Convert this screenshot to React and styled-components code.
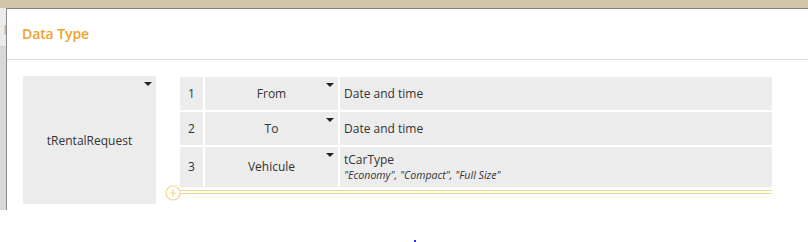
import React from "react";
import styled, { createGlobalStyle } from "styled-components";

const Global = createGlobalStyle`
  html, body { margin: 0; padding: 0; background: #fff; }
  body { font-family: "Open Sans", "Liberation Sans", sans-serif; color: #333; overflow: hidden; }
  * { box-sizing: border-box; }
`;

const Page = styled.div`
  position: relative;
  width: 808px;
  height: 242px;
  display: flex;
  flex-direction: column;
`;

const TopBar = styled.div`
  height: 8px;
  background: #d4c5aa;
  flex: none;
`;

const Main = styled.div`
  display: flex;
  align-items: flex-start;
  flex: 1;
`;

const SideStrip = styled.div`
  width: 7px;
  height: 202px;
  flex: none;
  display: flex;
  flex-direction: column;
  background: #d8d8d8;
  border-right: 1px solid #8a8a8a;
`;

const SideTop = styled.div`
  height: 39px;
  background: #ebebeb;
  display: flex;
  justify-content: flex-end;
  overflow: hidden;
  font-size: 14px;
  color: #b0b0b0;
  padding-top: 14px;
  line-height: 16px;
  border-bottom: 1px solid #cfcfcf;
`;

const SideGlyph = styled.span`
  margin-right: -6px;
`;

const Dialog = styled.div`
  flex: 1;
  border-top: 1px solid #808080;
  background: #fff;
  display: flex;
  flex-direction: column;
`;

const Header = styled.div`
  height: 51px;
  border-bottom: 1px solid #dedede;
  display: flex;
  align-items: center;
  padding-left: 15px;
  padding-bottom: 1px;
`;

const Title = styled.h2`
  margin: 0;
  font-size: 14px;
  font-weight: 600;
  color: #f0a22e;
  letter-spacing: -0.1px;
`;

const Body = styled.div`
  display: flex;
  align-items: flex-start;
  gap: 24px;
  padding: 16px 0 0 16px;
`;

const Caret = styled.span`
  position: absolute;
  top: 6px;
  right: 4px;
  width: 0;
  height: 0;
  border-left: 4px solid transparent;
  border-right: 4px solid transparent;
  border-top: 4px solid #222;
`;

const TypeBox = styled.div`
  position: relative;
  width: 133px;
  height: 128px;
  background: #ececec;
  display: flex;
  align-items: center;
  justify-content: center;
  font-size: 12px;
`;

const TableWrap = styled.div`
  position: relative;
  width: 592px;
  margin-top: 1px;
  display: flex;
  flex-direction: column;
`;

const Rows = styled.div`
  display: flex;
  flex-direction: column;
  gap: 2px;
`;

const Row = styled.div`
  display: grid;
  grid-template-columns: 23px 133px 1fr;
  gap: 2px;
  height: ${(p) => p.$h}px;
`;

const Cell = styled.div`
  position: relative;
  background: #ececec;
  display: flex;
  flex-direction: column;
  justify-content: center;
  align-items: ${(p) => (p.$left ? "flex-start" : "center")};
  padding-left: ${(p) => (p.$left ? "4px" : "0")};
  font-size: 12px;
  line-height: 16px;
`;

const Enum = styled.span`
  font-size: 10.6px;
  font-style: italic;
  line-height: 14px;
  color: #333;
`;

const Footer = styled.div`
  position: relative;
  margin-top: 3px;
  height: 4px;
  border-top: 1px solid #f4d38c;
  border-bottom: 1px solid #f4d38c;
`;

const AddButton = styled.svg`
  position: absolute;
  left: -15px;
  top: -6px;
`;

const Cursor = styled.span`
  position: absolute;
  left: 414px;
  top: 240px;
  width: 2px;
  height: 2px;
  background: #2a2aff;
`;

const rows = [
  { n: 1, name: "From", type: "Date and time", h: 33 },
  { n: 2, name: "To", type: "Date and time", h: 33 },
  { n: 3, name: "Vehicule", type: "tCarType", values: '"Economy", "Compact", "Full Size"', h: 40 },
];

export default function App() {
  return (
    <Page>
      <Global />
      <TopBar />
      <Main>
        <SideStrip>
          <SideTop>
            <SideGlyph>R</SideGlyph>
          </SideTop>
        </SideStrip>
        <Dialog>
          <Header>
            <Title>Data Type</Title>
          </Header>
          <Body>
            <TypeBox>
              tRentalRequest
              <Caret />
            </TypeBox>
            <TableWrap>
              <Rows>
                {rows.map((r) => (
                  <Row key={r.n} $h={r.h}>
                    <Cell>{r.n}</Cell>
                    <Cell>
                      {r.name}
                      <Caret />
                    </Cell>
                    <Cell $left>
                      <span>{r.type}</span>
                      {r.values && <Enum>{r.values}</Enum>}
                    </Cell>
                  </Row>
                ))}
              </Rows>
              <Footer>
                <AddButton width="16" height="16" viewBox="0 0 16 16">
                  <circle cx="8" cy="8" r="7" fill="#fff" stroke="#f4d38c" strokeWidth="1.2" />
                  <path d="M8 4.5v7M4.5 8h7" stroke="#f4d38c" strokeWidth="1.2" />
                </AddButton>
              </Footer>
            </TableWrap>
          </Body>
        </Dialog>
      </Main>
      <Cursor />
    </Page>
  );
}
